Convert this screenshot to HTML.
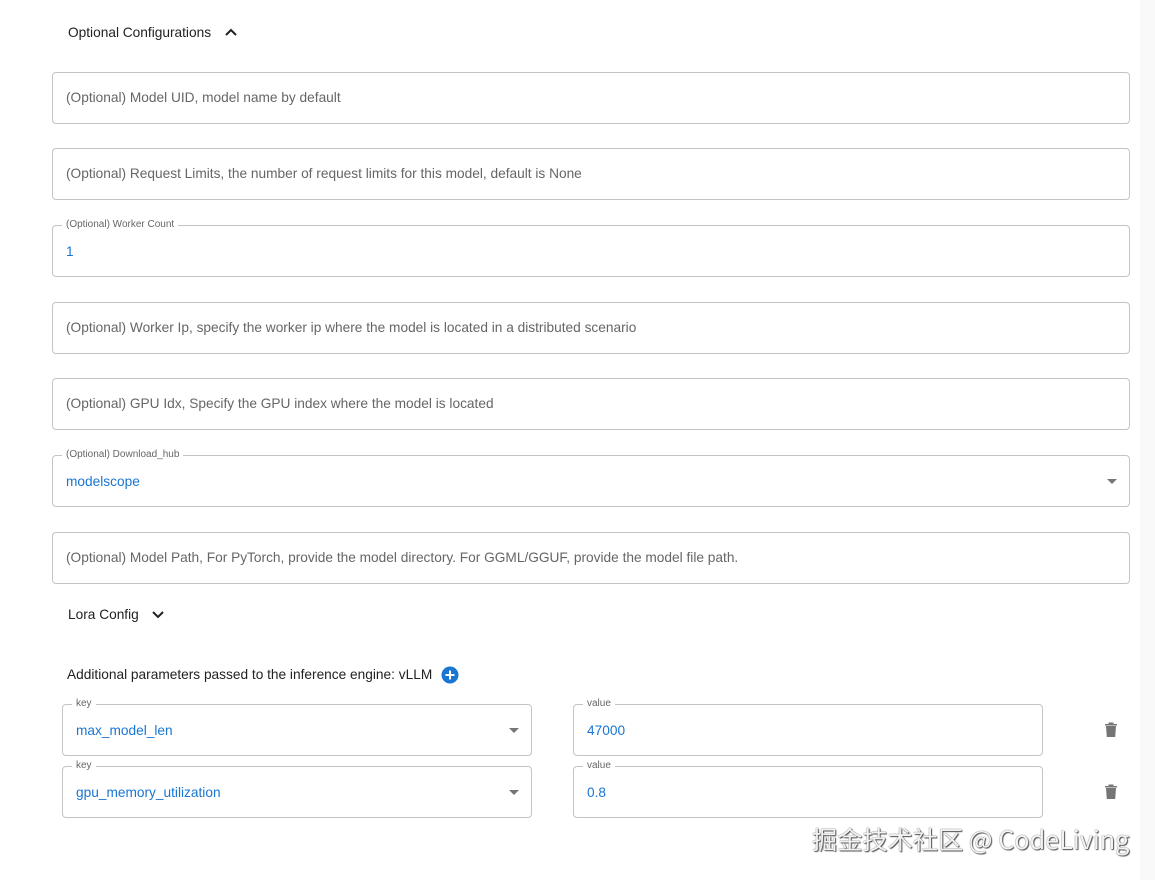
<!DOCTYPE html>
<html><head><meta charset="utf-8"><style>
*{box-sizing:border-box;margin:0;padding:0}
body{width:1155px;height:880px;background:#fff;font-family:"Liberation Sans",Arial,sans-serif;position:relative;overflow:hidden}
.strip{position:absolute;left:1140px;top:0;width:15px;height:880px;background:#f9f9f9}
.f{position:absolute;border:1px solid #c4c4c4;border-radius:4px;height:52px}
.ph{position:absolute;left:13px;top:17px;font-size:13.7px;color:#666}
.val{position:absolute;left:13px;top:18px;font-size:13.7px;color:#1976d2}
.lab{position:absolute;left:9px;top:-7px;font-size:10px;color:#666;background:#fff;padding:0 4px;line-height:12px}
.arr{position:absolute;right:12px;top:23px;width:0;height:0;border-left:5px solid transparent;border-right:5px solid transparent;border-top:5px solid #757575}
.t{position:absolute;font-size:13.7px;color:#222}
.trash{position:absolute}
</style></head><body>
<div class="strip"></div>
<div class="t" style="left:68px;top:25px">Optional Configurations</div>
<svg style="position:absolute;left:224px;top:26px" width="14" height="12" viewBox="0 0 14 12"><path d="M2 9 L7 4 L12 9" stroke="#222" stroke-width="2" fill="none"/></svg>

<div class="f" style="left:52px;top:72px;width:1078px"><span class="ph">(Optional) Model UID, model name by default</span></div>
<div class="f" style="left:52px;top:148px;width:1078px"><span class="ph">(Optional) Request Limits, the number of request limits for this model, default is None</span></div>
<div class="f" style="left:52px;top:225px;width:1078px"><span class="lab">(Optional) Worker Count</span><span class="val">1</span></div>
<div class="f" style="left:52px;top:302px;width:1078px"><span class="ph">(Optional) Worker Ip, specify the worker ip where the model is located in a distributed scenario</span></div>
<div class="f" style="left:52px;top:378px;width:1078px"><span class="ph">(Optional) GPU Idx, Specify the GPU index where the model is located</span></div>
<div class="f" style="left:52px;top:455px;width:1078px"><span class="lab">(Optional) Download_hub</span><span class="val">modelscope</span><span class="arr"></span></div>
<div class="f" style="left:52px;top:532px;width:1078px"><span class="ph">(Optional) Model Path, For PyTorch, provide the model directory. For GGML/GGUF, provide the model file path.</span></div>

<div class="t" style="left:68px;top:607px">Lora Config</div>
<svg style="position:absolute;left:151px;top:609px" width="14" height="12" viewBox="0 0 14 12"><path d="M2 3 L7 8 L12 3" stroke="#222" stroke-width="2" fill="none"/></svg>

<div class="t" style="left:67px;top:667px">Additional parameters passed to the inference engine: vLLM</div>
<svg style="position:absolute;left:441px;top:666px" width="18" height="18" viewBox="0 0 18 18"><circle cx="9" cy="9" r="8.5" fill="#1976d2"/><path d="M9 4.5v9M4.5 9h9" stroke="#fff" stroke-width="2"/></svg>

<div class="f" style="left:62px;top:704px;width:470px"><span class="lab">key</span><span class="val">max_model_len</span><span class="arr"></span></div>
<div class="f" style="left:573px;top:704px;width:470px"><span class="lab">value</span><span class="val">47000</span></div>
<div class="f" style="left:62px;top:766px;width:470px"><span class="lab">key</span><span class="val">gpu_memory_utilization</span><span class="arr"></span></div>
<div class="f" style="left:573px;top:766px;width:470px"><span class="lab">value</span><span class="val">0.8</span></div>

<svg class="trash" style="left:1104px;top:721px" width="14" height="17" viewBox="0 0 14 17"><path d="M1 3h12v1.5H1z M4.5 1.5h5v1.5h-5z M2 5h10l-0.8 11H2.8z" fill="#757575"/></svg>
<svg class="trash" style="left:1104px;top:783px" width="14" height="17" viewBox="0 0 14 17"><path d="M1 3h12v1.5H1z M4.5 1.5h5v1.5h-5z M2 5h10l-0.8 11H2.8z" fill="#757575"/></svg>

<div style="position:absolute;left:812px;top:824px;font-size:25.2px;color:#f2f2f2;font-family:'Noto Sans CJK SC','Liberation Sans',sans-serif;text-shadow:0 0 1px #333,1px 1px 1px #555;line-height:30px;white-space:nowrap">掘金技术社区 @ CodeLiving</div>
</body></html>
